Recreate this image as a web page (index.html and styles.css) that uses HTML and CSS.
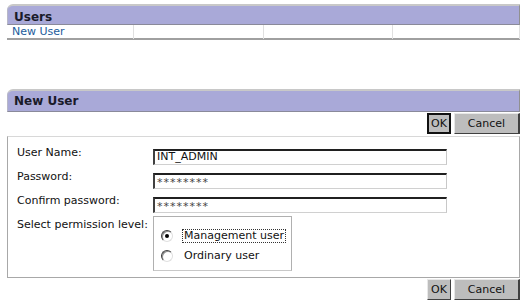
FILE: index.html
```html
<!DOCTYPE html>
<html lang="en">
<head>
    <meta charset="UTF-8">
    <title>Users</title>
    <link rel="stylesheet" href="styles.css">
</head>
<body>
    <div class="panel">
        <div class="panel-head">Users</div>
        <div class="list-row">
            <div class="cell"><a href="#">New User</a></div>
            <div class="cell"></div>
            <div class="cell"></div>
            <div class="cell"></div>
        </div>
    </div>

    <div class="panel form-panel">
        <div class="panel-head">New User</div>
        <div class="actions">
            <button class="btn btn-ok btn-default">OK</button>
            <button class="btn btn-cancel">Cancel</button>
        </div>
        <div class="form-box">
            <div class="form-row">
                <label>User Name:</label>
                <div class="field">INT_ADMIN</div>
            </div>
            <div class="form-row">
                <label>Password:</label>
                <div class="field secret">********</div>
            </div>
            <div class="form-row">
                <label>Confirm password:</label>
                <div class="field secret">********</div>
            </div>
            <div class="form-row perm-row">
                <label>Select permission level:</label>
                <div class="radio-box">
                    <div class="radio">
                        <span class="dot checked"></span>
                        <span class="radio-text focus">Management user</span>
                    </div>
                    <div class="radio">
                        <span class="dot"></span>
                        <span class="radio-text">Ordinary user</span>
                    </div>
                </div>
            </div>
        </div>
        <div class="actions">
            <button class="btn btn-ok">OK</button>
            <button class="btn btn-cancel">Cancel</button>
        </div>
    </div>
</body>
</html>
```

FILE: styles.css
```css
:root {
    --head-color: #a9a9d8;
    --link-color: #1d5c9c;
    --line-color: #a8a8a8;
    --btn-color: #bdbdbd;
}

* {
    margin: 0;
    padding: 0;
    box-sizing: border-box;
}

body {
    font-family: "DejaVu Sans", Verdana, sans-serif;
    font-size: 11px;
    color: #111;
    background: #fff;
    padding: 4px 12px 0 7px;
}

.panel {
    width: 513px;
}

.panel-head {
    height: 21px;
    background: var(--head-color);
    border-top: 2px solid #c8c8c8;
    border-bottom: 1px solid #8a8a9a;
    border-right: 1px solid #909090;
    border-left: 1px solid #b8b8c8;
    border-top-left-radius: 6px;
    font-weight: bold;
    font-size: 12px;
    color: #1a1a2a;
    padding: 4px 0 0 6px;
}

.list-row {
    display: grid;
    grid-template-columns: 127px 130px 129px 127px;
    height: 15px;
    border-bottom: 2px solid #a0a0a0;
}

.cell {
    border-right: 1px solid #e0e0e0;
    padding-left: 5px;
    line-height: 14px;
}

.cell a {
    color: var(--link-color);
    text-decoration: none;
}

.form-panel {
    margin-top: 49px;
}

.form-panel .panel-head {
    height: 23px;
    padding-top: 3px;
}

.actions {
    display: flex;
    justify-content: flex-end;
    gap: 3px;
    height: 24px;
    padding-top: 1px;
}

.btn {
    font-family: "DejaVu Sans", Verdana, sans-serif;
    font-size: 11px;
    height: 21px;
    background: var(--btn-color);
    color: #111;
    border: 1px solid;
    border-color: #e8e8e8 #404040 #404040 #e8e8e8;
    padding: 0;
}

.btn-ok {
    width: 24px;
}

.btn-default {
    border: 2px solid #111;
}

.btn-cancel {
    width: 66px;
    border-right-width: 2px;
}

.form-box {
    border: 1px solid var(--line-color);
    border-top-color: #d8d8d8;
    height: 142px;
    padding: 12px 0 0 9px;
}

.form-row {
    display: grid;
    grid-template-columns: 136px 294px;
    height: 24px;
}

.form-row label {
    line-height: 12px;
    margin-top: -2px;
}

.field {
    height: 16px;
    border-style: solid;
    border-width: 2px 1px 1px 2px;
    border-color: #202020 #c8c8c8 #d0d0d0 #404040;
    font-family: "DejaVu Sans", Tahoma, sans-serif;
    font-size: 11px;
    padding-left: 2px;
    line-height: 12px;
}

.secret {
    font-size: 11px;
    letter-spacing: 1px;
    line-height: 16px;
    color: #444;
}

.perm-row {
    height: 55px;
}

.radio-box {
    width: 139px;
    height: 55px;
    border: 1px solid #b0b0b0;
    border-bottom-color: #c8c8c8;
    padding: 9px 0 0 7px;
    margin-top: -5px;
}

.radio {
    display: flex;
    align-items: center;
    gap: 9px;
    height: 20px;
}

.dot {
    width: 12px;
    height: 12px;
    border-radius: 50%;
    border: 1px solid;
    border-color: #404040 #e0e0e0 #e0e0e0 #404040;
    box-shadow: inset 1px 1px 0 #909090;
    background: #fff;
    display: flex;
    align-items: center;
    justify-content: center;
}

.dot.checked::after {
    content: '';
    width: 4px;
    height: 4px;
    border-radius: 50%;
    background: #000;
}

.radio-text {
    padding: 0 1px;
    border: 1px dotted transparent;
    line-height: 12px;
}

.radio-text.focus {
    border-color: #333;
}
```
